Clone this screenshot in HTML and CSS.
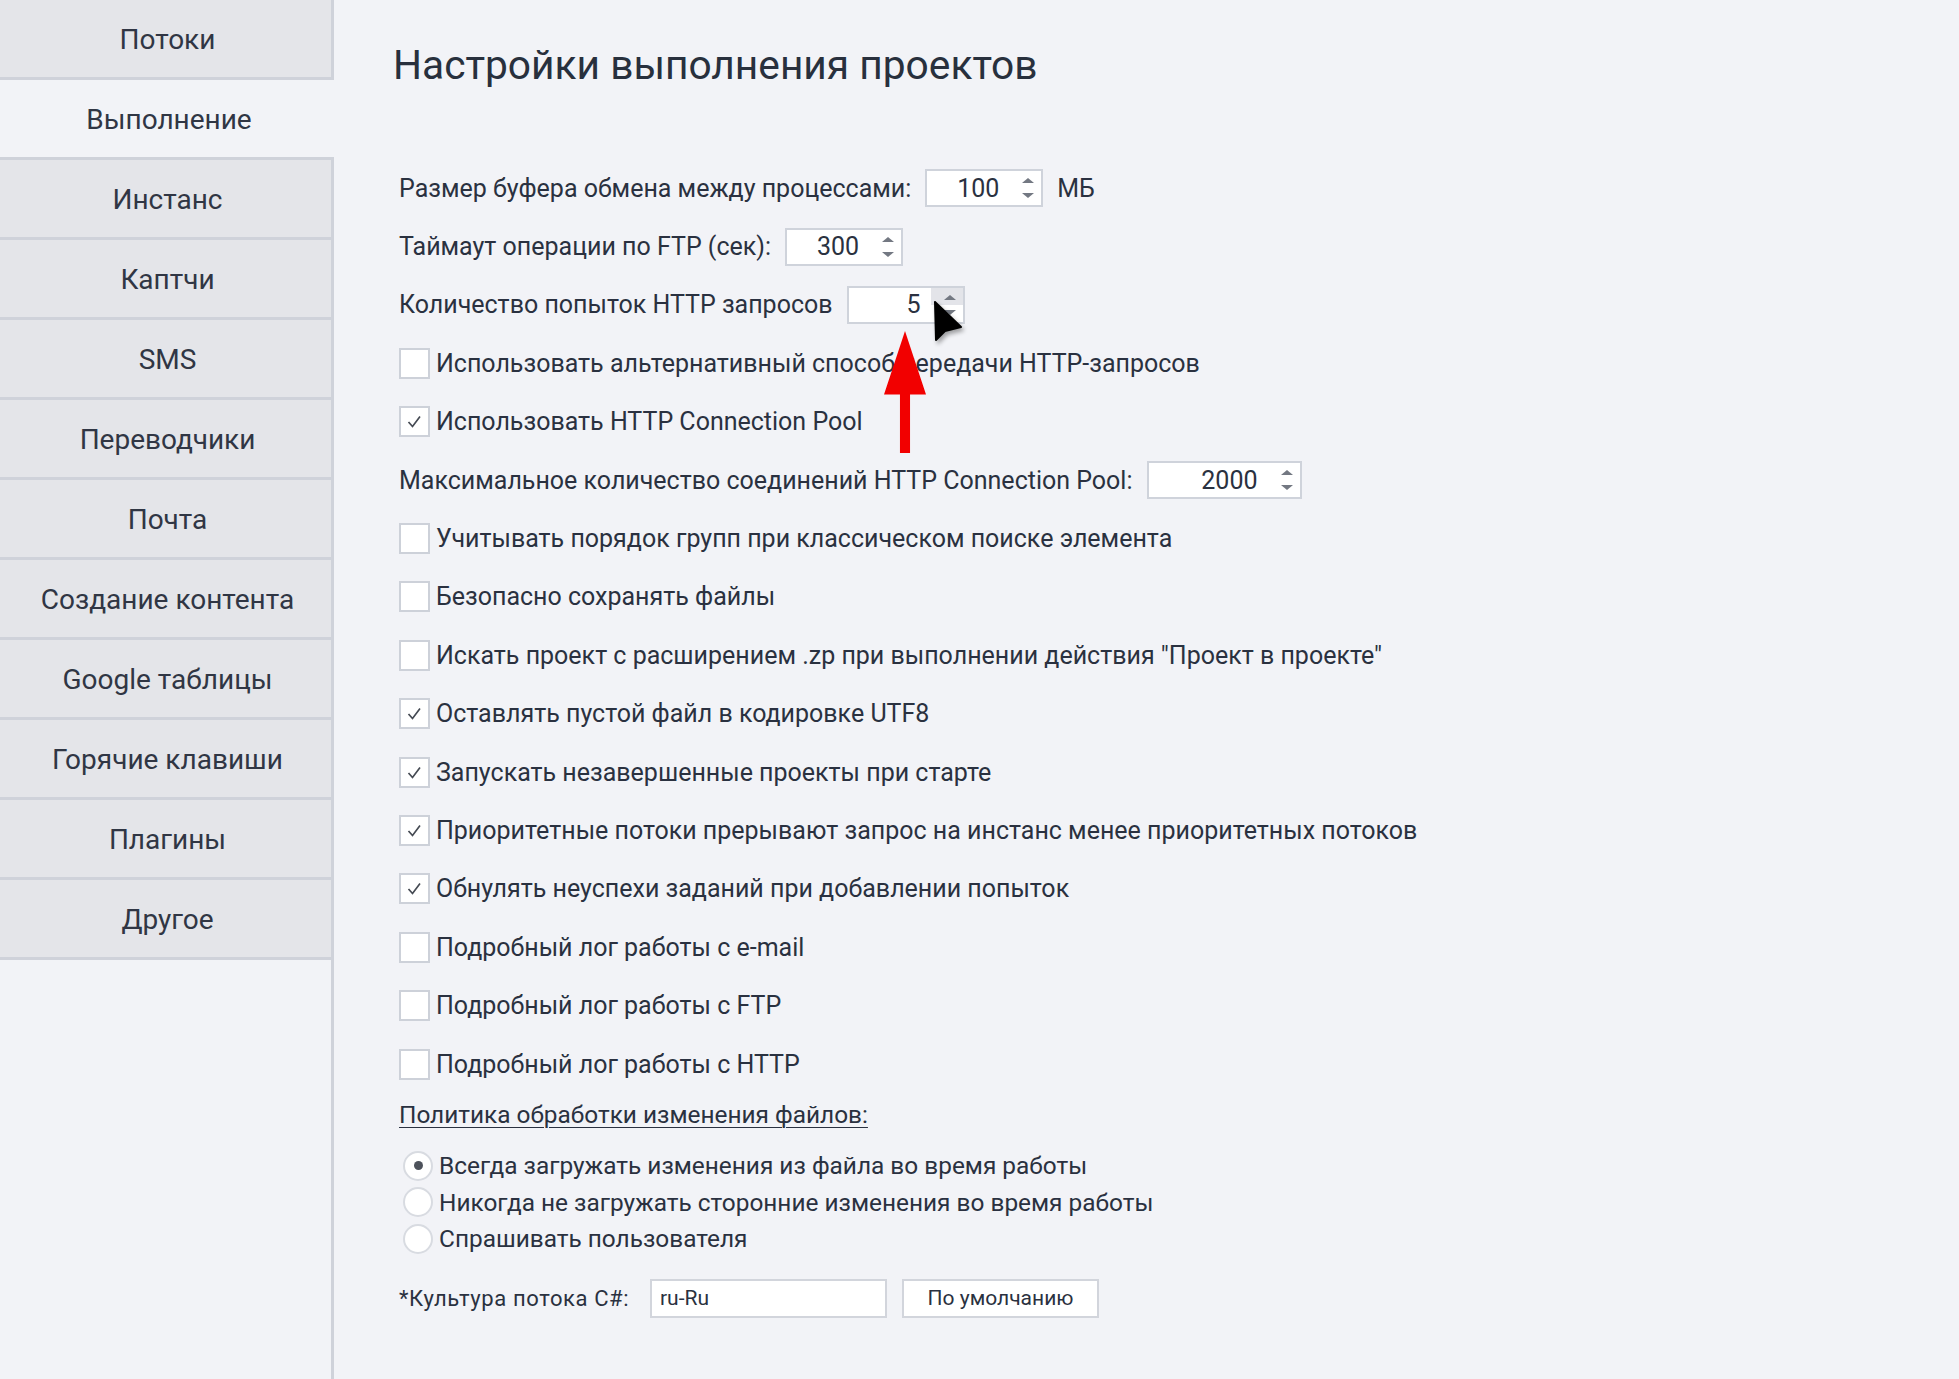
FILE: index.html
```html
<!DOCTYPE html>
<html lang="ru">
<head>
<meta charset="utf-8">
<title>Настройки выполнения проектов</title>
<link rel="stylesheet" href="styles.css">
</head>
<body>
<div class="app">
  <nav class="sidebar">
    <div class="nav-item">Потоки</div>
    <div class="nav-item active">Выполнение</div>
    <div class="nav-item">Инстанс</div>
    <div class="nav-item">Каптчи</div>
    <div class="nav-item">SMS</div>
    <div class="nav-item">Переводчики</div>
    <div class="nav-item">Почта</div>
    <div class="nav-item">Создание контента</div>
    <div class="nav-item">Google таблицы</div>
    <div class="nav-item">Горячие клавиши</div>
    <div class="nav-item">Плагины</div>
    <div class="nav-item">Другое</div>
  </nav>
  <main class="content">
    <h1 class="title">Настройки выполнения проектов</h1>
    <div class="settings">
      <div class="row">
        <span class="label">Размер буфера обмена между процессами:</span>
        <div class="spin"><span class="val">100</span><span class="arrows"><i class="up"></i><i class="dn"></i></span></div>
        <span class="unit">МБ</span>
      </div>
      <div class="row">
        <span class="label">Таймаут операции по FTP (сек):</span>
        <div class="spin"><span class="val">300</span><span class="arrows"><i class="up"></i><i class="dn"></i></span></div>
      </div>
      <div class="row">
        <span class="label">Количество попыток HTTP запросов</span>
        <div class="spin hover"><span class="val">5</span><span class="arrows"><i class="up"></i><i class="dn"></i></span>
          <svg class="cursor" width="34" height="46" viewBox="0 0 34 46"><polygon points="2,2 3,40 12,31 28,27" fill="#000" stroke="#000" stroke-width="2" stroke-linejoin="round"/></svg>
        </div>
      </div>
      <label class="row check"><span class="box"></span><span>Использовать альтернативный способ передачи HTTP-запросов</span></label>
      <label class="row check"><span class="box on"><svg viewBox="0 0 27 27"><polyline points="7.5,14 11.5,18.5 19,8.5"/></svg></span><span>Использовать HTTP Connection Pool</span></label>
      <div class="row">
        <span class="label">Максимальное количество соединений HTTP Connection Pool:</span>
        <div class="spin wide"><span class="val">2000</span><span class="arrows"><i class="up"></i><i class="dn"></i></span></div>
      </div>
      <label class="row check"><span class="box"></span><span>Учитывать порядок групп при классическом поиске элемента</span></label>
      <label class="row check"><span class="box"></span><span>Безопасно сохранять файлы</span></label>
      <label class="row check"><span class="box"></span><span>Искать проект с расширением .zp при выполнении действия "Проект в проекте"</span></label>
      <label class="row check"><span class="box on"><svg viewBox="0 0 27 27"><polyline points="7.5,14 11.5,18.5 19,8.5"/></svg></span><span>Оставлять пустой файл в кодировке UTF8</span></label>
      <label class="row check"><span class="box on"><svg viewBox="0 0 27 27"><polyline points="7.5,14 11.5,18.5 19,8.5"/></svg></span><span>Запускать незавершенные проекты при старте</span></label>
      <label class="row check"><span class="box on"><svg viewBox="0 0 27 27"><polyline points="7.5,14 11.5,18.5 19,8.5"/></svg></span><span>Приоритетные потоки прерывают запрос на инстанс менее приоритетных потоков</span></label>
      <label class="row check"><span class="box on"><svg viewBox="0 0 27 27"><polyline points="7.5,14 11.5,18.5 19,8.5"/></svg></span><span>Обнулять неуспехи заданий при добавлении попыток</span></label>
      <label class="row check"><span class="box"></span><span>Подробный лог работы с e-mail</span></label>
      <label class="row check"><span class="box"></span><span>Подробный лог работы с FTP</span></label>
      <label class="row check"><span class="box"></span><span>Подробный лог работы с HTTP</span></label>
      <div class="group-title">Политика обработки изменения файлов:</div>
      <div class="radios">
        <label class="radio"><span class="circle on"></span><span>Всегда загружать изменения из файла во время работы</span></label>
        <label class="radio"><span class="circle"></span><span>Никогда не загружать сторонние изменения во время работы</span></label>
        <label class="radio"><span class="circle"></span><span>Спрашивать пользователя</span></label>
      </div>
      <div class="culture">
        <span class="culture-label">*Культура потока C#:</span>
        <div class="text-input">ru-Ru</div>
        <div class="button">По умолчанию</div>
      </div>
    </div>
    <div class="red-arrow"></div>
  </main>
</div>
</body>
</html>
```
FILE: styles.css
```css
* { box-sizing: border-box; }
html, body { margin: 0; padding: 0; }
body {
  background: #f2f3f7;
  color: #2a3140;
  font-family: Roboto, "Noto Sans", sans-serif;
  font-size: 25px;
}
.app { display: flex; min-height: 1379px; }

.sidebar {
  width: 334px;
  flex: none;
  border-right: 3px solid #cfd2da;
  display: flex;
  flex-direction: column;
}
.nav-item {
  height: 80px;
  background: #e4e5e9;
  border-bottom: 3px solid #cfd2da;
  display: flex;
  align-items: center;
  justify-content: center;
  font-size: 28px;
  color: #303644;
  padding: 2px 0 0 4px;
}
.nav-item.active {
  background: #f2f3f7;
  margin-right: -3px;
}

.content {
  flex: 1;
  padding: 36px 0 0 65px;
  position: relative;
}
.title {
  margin: 0 0 0 -6px;
  font-size: 40.7px;
  font-weight: 400;
  line-height: 58px;
  color: #28303d;
}
.settings { margin-top: 65px; display: flex; flex-direction: column; }
.row {
  height: 58.4px;
  display: flex;
  align-items: center;
  gap: 14px;
}
.check { gap: 6px; }
.box {
  width: 31px;
  height: 31px;
  border: 2px solid #cdd1d9;
  background: #fff;
  flex: none;
  display: flex;
  align-items: center;
  justify-content: center;
}
.box svg { width: 27px; height: 27px; }
.box polyline { fill: none; stroke: #454a53; stroke-width: 1.7; }

.spin {
  width: 118px;
  height: 38px;
  border: 2px solid #cfd3db;
  background: #fff;
  display: flex;
  justify-content: flex-end;
  align-items: center;
  position: relative;
}
.spin.wide { width: 155px; }
.val { padding-right: 16px; }
.arrows {
  width: 26px;
  align-self: stretch;
  display: flex;
  flex-direction: column;
  align-items: center;
  justify-content: center;
  gap: 10px;
}
.arrows i { width: 0; height: 0; border-left: 6px solid transparent; border-right: 6px solid transparent; }
.arrows .up { border-bottom: 5px solid #737882; }
.arrows .dn { border-top: 5px solid #737882; }
.spin.hover .arrows { position: relative; }
.spin.hover .arrows::before {
  content: "";
  position: absolute;
  left: -6px; right: 0; top: 0; height: 50%;
  background: #e3e4e9;
}
.spin.hover .arrows i { position: relative; }
.cursor {
  position: absolute;
  left: 84px;
  top: 12px;
  filter: drop-shadow(2px 3px 2px rgba(0,0,0,0.35));
}

.group-title {
  height: 42px;
  display: flex;
  align-items: center;
  font-size: 24.4px;
  text-decoration: underline;
  text-underline-offset: 4px;
  text-decoration-thickness: 1px;
}
.radios { margin-top: 12px; display: flex; flex-direction: column; font-size: 24.4px; }
.radio {
  height: 36.5px;
  display: flex;
  align-items: center;
  gap: 6px;
  padding-left: 4px;
}
.circle {
  width: 30px;
  height: 30px;
  border-radius: 50%;
  border: 2px solid #d8dbe1;
  background: #fff;
  flex: none;
  display: flex;
  align-items: center;
  justify-content: center;
}
.circle.on::after {
  content: "";
  width: 9px; height: 9px; border-radius: 50%;
  background: #4d525b;
}
.culture {
  margin-top: 22px;
  display: flex;
  align-items: center;
  font-size: 21px;
}
.culture-label { width: 251px; font-size: 22px; letter-spacing: 0.6px; }
.text-input {
  width: 237px;
  height: 39px;
  border: 2px solid #d2d5dc;
  background: #fff;
  padding-left: 8px;
  display: flex;
  align-items: center;
}
.button {
  margin-left: 15px;
  width: 197px;
  height: 39px;
  border: 2px solid #d2d5dc;
  background: #fff;
  display: flex;
  align-items: center;
  justify-content: center;
}
.red-arrow {
  position: absolute;
  left: 550px;
  top: 331px;
  width: 42px;
  height: 122px;
  background: #f20000;
  clip-path: polygon(50% 0, 100% 52%, 62% 52%, 62% 100%, 38% 100%, 38% 52%, 0 52%);
}
```
